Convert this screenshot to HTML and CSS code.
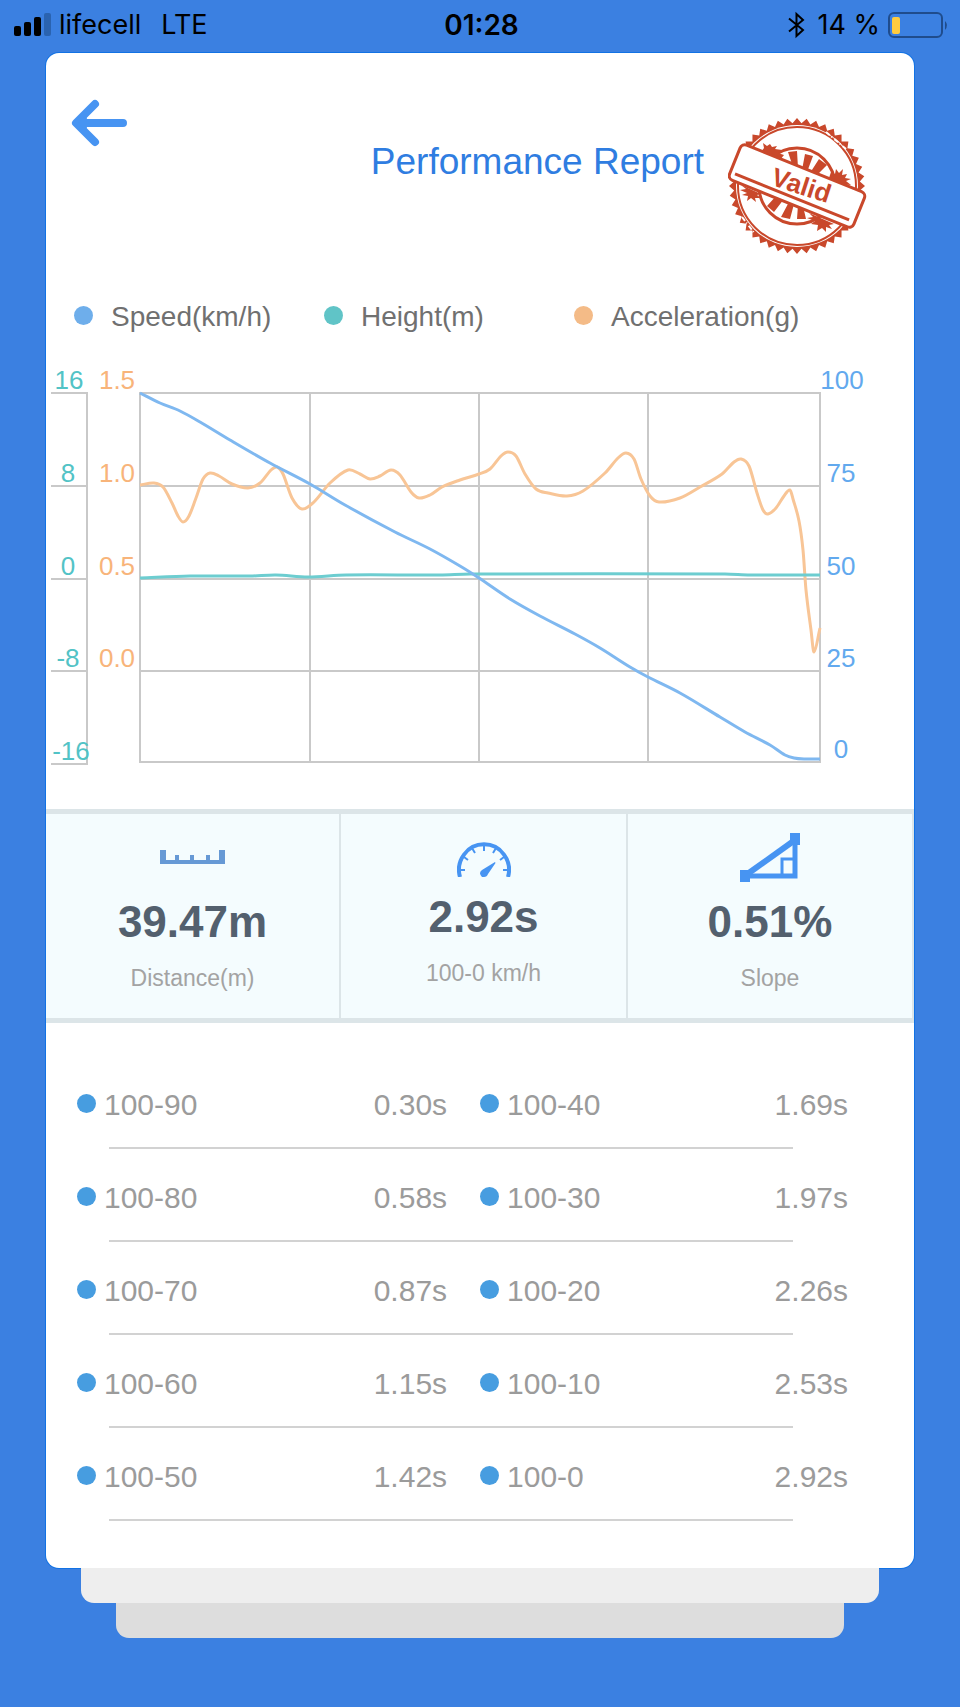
FILE: index.html
```html
<!DOCTYPE html>
<html lang="en">
  <head>
    <meta charset="UTF-8" />
    <meta name="viewport" content="width=device-width, initial-scale=1" />
    <title>Performance Report</title>
    <link rel="stylesheet" href="styles.css">
  </head>
  <body>
    <div class="status-bar">
      <div class="status-left">
        <svg class="signal" width="37" height="23" viewBox="0 0 37 23" aria-hidden="true">
          <rect x="0" y="13" width="7" height="10" rx="2" />
          <rect x="10" y="9" width="7" height="14" rx="2" />
          <rect x="20" y="4" width="7" height="19" rx="2" />
          <rect x="30" y="0" width="7" height="23" rx="2" fill="#2a63b0" />
        </svg>
        <span>lifecell</span>
        <span class="network">LTE</span>
      </div>
      <time class="clock">01:28</time>
      <div class="status-right">
        <svg width="17" height="28" viewBox="0 0 17 28" fill="none" stroke="#000" stroke-width="2" aria-hidden="true">
          <path d="M1 7.500L15 19L8.500 25V3L15 9L1 20.500" />
        </svg>
        <span>14 %</span>
        <svg class="battery" width="61" height="26" viewBox="0 0 61 26" aria-hidden="true">
          <rect x="1" y="1" width="53" height="24" rx="5" fill="none" stroke="#1f4c8c" stroke-width="2" />
          <rect x="4" y="5" width="8" height="17" rx="2" fill="#fecb3e" />
          <path d="M57 9Q61 13 57 18Z" fill="#1f4c8c" />
        </svg>
      </div>
    </div>

    <main class="stack">
      <section class="card">
        <header>
          <button class="back" type="button" aria-label="Back">
            <svg width="57" height="48" viewBox="0 0 57 48" fill="none" stroke="#4794f2" stroke-width="8" stroke-linecap="round" stroke-linejoin="round" aria-hidden="true">
              <path d="M24 5L5 24L24 43M6 24H52" />
              <path d="M14 20L10 24L14 28Z" stroke-width="4" />
            </svg>
          </button>
          <h1>Performance Report</h1>
          <svg class="stamp" width="140" height="140" viewBox="-69 -71 140 140">
            <polygon id="stampTeeth" fill="#c9482b" />
            <circle r="61" fill="#fff" />
            <g fill="none" stroke="#c9482b">
              <circle r="59" stroke-width="2" />
              <circle r="38" stroke-width="3" />
            </g>
            <!-- worn spots on the ring -->
            <path d="M29 -54L49 -37M-55 31L-42 48" stroke="#fff" stroke-width="2" stroke-dasharray="5 2 1 3" />
            <g fill="#c9482b">
              <path d="M-9 -34L0 -35L1 -18L-4 -19ZM8 -32L16 -30L10 -14L5 -16ZM22 -27L30 -21L18 -9L13 -13Z" />
              <path d="M-30 20L-20 9L-13 13L-23 26ZM-16 31L-8 16L-3 18L-7 33ZM0 33L1 19L6 20L9 33Z" />
              <path d="M-34 -43L-30 -40L-27 -42L-25 -39L-20 -40L-22 -37L-15 -36L-19 -33L-13 -31L-17 -26L-36 -34L-33 -38Z" />
              <path d="M34 -14L38 -12L39 -17L42 -13L46 -17L45 -11L50 -12L48 -8L54 -7L49 -5L54 -1L40 -2L32 -8Z" />
              <path d="M-56 -1L-36 8L-40 9L-36 12L-42 12L-41 16L-46 12L-50 15L-49 10L-55 9L-50 7L-57 4L-51 3Z" />
              <path d="M12 27L37 38L32 39L35 43L29 41L29 46L25 42L20 45L21 39L14 38L18 35L10 32L16 31Z" />
            </g>
            <g transform="rotate(22)">
              <rect x="-67" y="-19" width="134" height="38" rx="5" fill="#fff" stroke="#c9482b" stroke-width="3" />
              <path d="M-62 12H61" stroke="#c9482b" stroke-width="3" />
            </g>
            <text class="stamp-text" x="4" y="7" transform="rotate(18)">Valid</text>
          </svg>
        </header>

        <ul class="legend">
          <li><i class="dot speed"></i>Speed(km/h)</li>
          <li><i class="dot height"></i>Height(m)</li>
          <li><i class="dot accel"></i>Acceleration(g)</li>
        </ul>

        <svg class="chart" viewBox="0 0 868 420" role="img" aria-label="Speed, height and acceleration chart">
          <g fill="none" stroke="#c9c9c9" stroke-width="2">
            <path d="M94 33H774V402H94ZM94 126H774M94 219H774M94 311H774M264 33V402M433 33V402M602 33V402" />
            <path d="M5 33H41V404H5M5 126H41M5 219H41M5 311H41" />
          </g>
          <g class="axis axis-height">
            <text x="23" y="29">16</text>
            <text x="22" y="122">8</text>
            <text x="22" y="215">0</text>
            <text x="22" y="307">-8</text>
            <text x="25" y="400">-16</text>
          </g>
          <g class="axis axis-accel">
            <text x="71" y="29">1.5</text>
            <text x="71" y="122">1.0</text>
            <text x="71" y="215">0.5</text>
            <text x="71" y="307">0.0</text>
          </g>
          <g class="axis axis-speed">
            <text x="796" y="29">100</text>
            <text x="795" y="122">75</text>
            <text x="795" y="215">50</text>
            <text x="795" y="307">25</text>
            <text x="795" y="398">0</text>
          </g>
          <path id="accelLine" class="line line-accel" />
          <path id="heightLine" class="line line-height" />
          <path id="speedLine" class="line line-speed" />
        </svg>

        <div class="stats">
          <div class="stat">
            <div class="stat-icon">
              <svg width="65" height="14" viewBox="0 0 65 14" fill="#6699d5" aria-hidden="true">
                <path d="M0 0H6V10H15V5H19V10H30V5H34V10H46V5H50V10H59V0H65V14H0Z" />
              </svg>
            </div>
            <strong>39.47m</strong>
            <span>Distance(m)</span>
          </div>
          <div class="stat stat-main">
            <div class="stat-icon">
              <svg width="54" height="35" viewBox="0 0 54 35" fill="none" stroke="#4794f2" aria-hidden="true">
                <path d="M3 35A25 25.500 0 1 1 51 35" stroke-width="4" />
                <path d="M3 28H8M51 28H46M7 15L11 18M47 15L43 18M15 6L18 11M39 6L36 11M27 3V9" stroke-width="2" />
                <path d="M38 20L38.500 21L31 32Q30 35 27 35H25Q21 31 25 28Z" fill="#4794f2" stroke="none" />
              </svg>
            </div>
            <strong>2.92s</strong>
            <span>100-0 km/h</span>
          </div>
          <div class="stat stat-last">
            <div class="stat-icon">
              <svg width="60" height="49" viewBox="0 0 60 49" aria-hidden="true">
                <path d="M6 43H55V8" fill="none" stroke="#4794f2" stroke-width="5" />
                <path d="M6 42L55 7" fill="none" stroke="#4794f2" stroke-width="6" />
                <path d="M42 41V26H55" fill="none" stroke="#4794f2" stroke-width="3" />
                <path d="M0 37H10V49H0ZM50 0H60V12H50Z" fill="#4794f2" />
              </svg>
            </div>
            <strong>0.51%</strong>
            <span>Slope</span>
          </div>
        </div>

        <table class="splits">
          <tbody>
            <tr>
              <th scope="row"><i class="dot"></i>100-90</th>
              <td>0.30s</td>
              <th scope="row"><i class="dot"></i>100-40</th>
              <td>1.69s</td>
            </tr>
            <tr>
              <th scope="row"><i class="dot"></i>100-80</th>
              <td>0.58s</td>
              <th scope="row"><i class="dot"></i>100-30</th>
              <td>1.97s</td>
            </tr>
            <tr>
              <th scope="row"><i class="dot"></i>100-70</th>
              <td>0.87s</td>
              <th scope="row"><i class="dot"></i>100-20</th>
              <td>2.26s</td>
            </tr>
            <tr>
              <th scope="row"><i class="dot"></i>100-60</th>
              <td>1.15s</td>
              <th scope="row"><i class="dot"></i>100-10</th>
              <td>2.53s</td>
            </tr>
            <tr>
              <th scope="row"><i class="dot"></i>100-50</th>
              <td>1.42s</td>
              <th scope="row"><i class="dot"></i>100-0</th>
              <td>2.92s</td>
            </tr>
          </tbody>
        </table>
      </section>
      <div class="sheet sheet-middle"></div>
      <div class="sheet sheet-back"></div>
    </main>

    <script>
      const accel = [
        [94, 125], [108, 123], [117, 127], [126, 143], [132, 156], [137, 162],
        [143, 156], [150, 138], [157, 119], [164, 113], [173, 116], [186, 124],
        [202, 128], [214, 123], [225, 110], [231, 107], [237, 114], [246, 138],
        [256, 149], [268, 142], [284, 123], [302, 110], [314, 114], [324, 119],
        [334, 116], [345, 110], [354, 115], [365, 132], [373, 138], [384, 135],
        [396, 127], [414, 120], [433, 114], [444, 109], [455, 96], [462, 92],
        [470, 96], [479, 114], [490, 129], [502, 133], [521, 136], [537, 131],
        [559, 113], [572, 98], [580, 93], [588, 99], [595, 119], [604, 136],
        [613, 142], [634, 138], [654, 127], [676, 114], [688, 102], [695, 99],
        [703, 106], [711, 133], [717, 150], [722, 154], [730, 148], [738, 136],
        [744, 130], [747, 139], [753, 161], [757, 190], [760, 230], [765, 270],
        [768, 292], [774, 268],
      ];
      const speed = [
        [94, 33], [114, 43], [134, 51], [154, 62], [184, 80], [224, 103],
        [264, 124], [299, 145], [349, 172], [384, 189], [414, 206], [433, 218],
        [464, 239], [494, 256], [529, 274], [554, 288], [584, 307], [602, 317],
        [634, 333], [674, 357], [699, 372], [724, 385], [739, 395], [748, 398],
        [758, 399], [774, 399],
      ];
      const height = [
        [94, 218], [144, 216], [204, 216], [230, 215], [262, 217], [300, 215],
        [394, 215], [424, 214], [679, 214], [704, 215], [774, 215],
      ];

      // smooth curve that passes through every point
      function smoothPath(points) {
        let d = "M" + points[0];
        for (let i = 0; i < points.length - 1; i++) {
          const p0 = points[i - 1] || points[i];
          const p1 = points[i];
          const p2 = points[i + 1];
          const p3 = points[i + 2] || p2;
          // control points stay within a third of the segment
          const w = (p2[0] - p1[0]) / 3;
          const s1 = (p2[1] - p0[1]) / (p2[0] - p0[0]);
          const s2 = (p3[1] - p1[1]) / (p3[0] - p1[0]);
          const c1 = [p1[0] + w, p1[1] + w * s1];
          const c2 = [p2[0] - w, p2[1] - w * s2];
          d += "C" + c1 + " " + c2 + " " + p2;
        }
        return d;
      }

      document.getElementById("accelLine").setAttribute("d", smoothPath(accel));
      document.getElementById("speedLine").setAttribute("d", smoothPath(speed));
      document.getElementById("heightLine").setAttribute("d", smoothPath(height));

      // toothed edge of the stamp
      const teeth = [];
      for (let i = 0; i < 88; i++) {
        const r = i % 2 ? 63 : 68;
        const a = (i * Math.PI) / 44;
        teeth.push([r * Math.cos(a), r * Math.sin(a)]);
      }
      document.getElementById("stampTeeth").setAttribute("points", teeth.join(" "));
    </script>
  </body>
</html>
```
FILE: styles.css
```css
* {
  margin: 0;
  padding: 0;
  box-sizing: border-box;
}
body {
  background: #3b80e1;
  color: #707070;
  min-height: 100vh;
  font-family: "Liberation Sans", Arial, sans-serif;
}
svg {
  display: block;
}

/* Status bar */
.status-bar {
  display: grid;
  grid-template-columns: 1fr auto 1fr;
  align-items: center;
  height: 53px;
  padding: 0 11px 4px 14px;
  color: #000;
  font-family: Inter, sans-serif;
  font-size: 27px;
  line-height: 32px;
}
.status-left,
.status-right {
  display: flex;
  align-items: center;
  gap: 8px;
}
.network {
  margin-left: 12px;
}
.clock {
  font-size: 28px;
  font-weight: 600;
}
.status-right {
  justify-content: flex-end;
}
.status-right span {
  margin-left: 4px;
}

/* Card and the sheets under it */
.stack {
  padding: 0 46px 70px;
}
.card {
  background: #fff;
  border-radius: 13px;
  box-shadow: 0 0 0 1px #1272e4;
  padding-bottom: 47px;
  position: relative;
}
.sheet {
  height: 35px;
  border-radius: 0 0 13px 13px;
}
.sheet-middle {
  margin: 0 35px;
  background: #eee;
  position: relative;
}
.sheet-back {
  margin: 0 70px;
  background: #ddd;
}

/* Header */
header {
  display: flex;
  align-items: flex-start;
  padding: 46px 46px 0 25px;
}
.back {
  background: none;
  border: none;
  cursor: pointer;
}
h1 {
  margin: 41px 24px 0 auto;
  color: #2f7de1;
  font-size: 37px;
  font-weight: 400;
  line-height: 44px;
}
.stamp {
  margin-top: 16px;
}
.stamp-text {
  fill: #c9482b;
  font-size: 26px;
  font-weight: 700;
  text-anchor: middle;
}

/* Legend */
.dot {
  flex: none;
  width: 19px;
  height: 19px;
  border-radius: 50%;
  background: #479de0;
}
.legend {
  display: grid;
  grid-template-columns: 250px 250px 1fr;
  margin-top: 46px;
  padding-left: 28px;
  list-style: none;
  font-size: 28px;
  line-height: 32px;
}
.legend li {
  display: flex;
  align-items: center;
  gap: 18px;
}
.legend .dot {
  margin-bottom: 4px;
}
.dot.speed {
  background: #6eaeeb;
}
.dot.height {
  background: #60c4c7;
}
.dot.accel {
  background: #f4bb87;
}

/* Chart */
.chart {
  width: 100%;
  margin-top: 27px;
}
.axis {
  font-size: 26px;
  text-anchor: middle;
}
.axis-height {
  fill: #52c3c6;
}
.axis-accel {
  fill: #f8b47a;
}
.axis-speed {
  fill: #62a9ee;
}
.line {
  fill: none;
  stroke-width: 3;
}
.line-accel {
  stroke: #f8c596;
}
.line-height {
  stroke: #6dcdd0;
}
.line-speed {
  stroke: #7fb8f0;
}

/* Stats */
.stats {
  display: grid;
  grid-template-columns: 295fr 287fr 286fr;
  margin-top: 29px;
  background: #f4fcfe;
  border-top: 5px solid #dce5e8;
  border-bottom: 5px solid #dce5e8;
}
.stat {
  display: flex;
  flex-direction: column;
  align-items: center;
  min-height: 204px;
  padding-top: 18px;
  border-right: 2px solid #dce5e8;
}
.stat-icon {
  display: flex;
  align-items: center;
  height: 50px;
}
.stat-main .stat-icon {
  align-items: flex-end;
  height: 45px;
}
.stat strong {
  margin-top: 15px;
  color: #53606e;
  font-size: 44px;
  line-height: 50px;
}
.stat span {
  margin-top: 17px;
  color: #a3a3a3;
  font-size: 23px;
  line-height: 28px;
}

/* Split times */
.splits {
  width: calc(100% - 97px);
  margin: 33px 66px 0 31px;
  border-collapse: collapse;
  table-layout: fixed;
  color: #9b9b9b;
  font-size: 30px;
}
.splits tr {
  height: 93px;
  background: linear-gradient(#d2d2d2, #d2d2d2) no-repeat 32px 100% / calc(100% - 87px) 2px;
}
.splits th {
  padding-top: 4px;
  font-weight: 400;
  text-align: left;
}
.splits th:first-child,
.splits th:first-child + td {
  width: 24%;
}
.splits td {
  padding-top: 4px;
  text-align: right;
}
.splits td + th {
  padding-left: 33px;
}
.splits .dot {
  display: inline-block;
  margin-right: 8px;
  vertical-align: 2px;
}
```
